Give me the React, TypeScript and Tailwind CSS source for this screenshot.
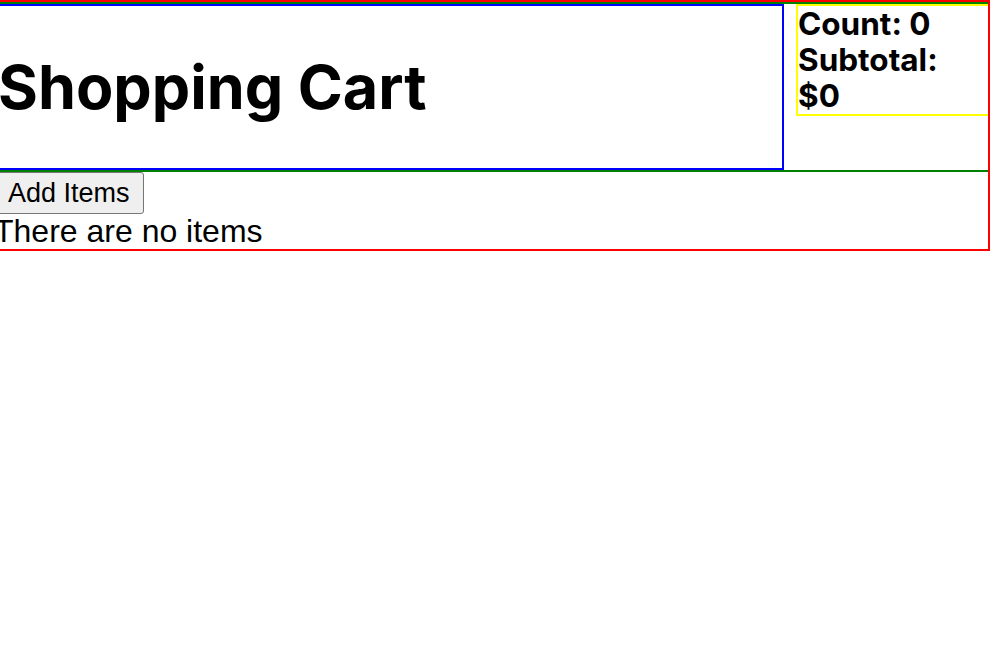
export default function App() {
  return (
    <div className="w-[990px] h-[650px] overflow-hidden bg-white">
      <div className="ml-[-8px] w-[998px] overflow-hidden border-2 border-[red]">
        <div className="mr-[-20px] flex items-start border-2 border-[green]">
          <div className="w-[788px] shrink-0 self-stretch border-2 border-[blue]">
            <h1 className="my-[43px] text-[61px] font-bold leading-[76px] text-black" style={{ fontFamily: "Inter, sans-serif" }}>
              Shopping Cart
            </h1>
          </div>
          <div className="ml-[12px] w-[200px] shrink-0 border-2 border-[yellow]">
            <div className="w-[186px] text-[31.5px] font-bold leading-[36px] text-black" style={{ fontFamily: "Inter, sans-serif" }}>
              <div>Count: 0</div>
              <div>Subtotal: $0</div>
            </div>
          </div>
        </div>
        <div style={{ fontFamily: '"Liberation Sans", Arial, sans-serif' }}>
          <button className="block rounded-[3px] border border-[#767676] bg-[#efefef] px-[13px] py-[1px] text-[27px] leading-[38px] text-black">
            Add Items
          </button>
          <div className="text-[32px] leading-[35px] text-black">There are no items</div>
        </div>
      </div>
    </div>
  );
}
